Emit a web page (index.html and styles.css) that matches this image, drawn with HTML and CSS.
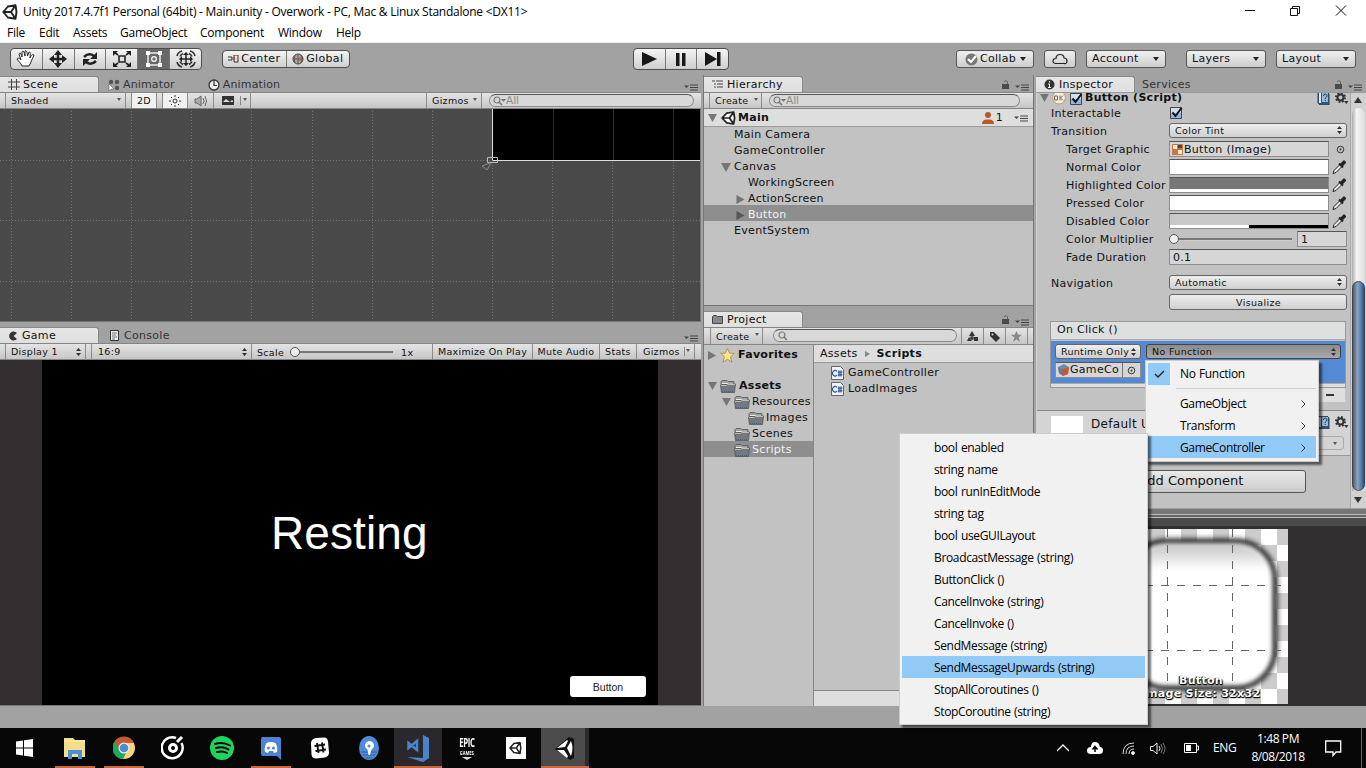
FILE: index.html
```html
<!DOCTYPE html>
<html lang="en">
<head>
<meta charset="utf-8">
<title>Unity Editor</title>
<link rel="stylesheet" href="styles.css">
</head>
<body>
<svg class="defs" width="0" height="0">
  <symbol id="unity" viewBox="0 0 16 16"><path fill="none" stroke="#222" stroke-width="1.900" stroke-linejoin="round" d="M1.200 8L6 2.500 13.500 1.200 14.500 8l-1 6.800L6 13.500zM2 8h7l4-6M9 8l4 6"/></symbol>
  <symbol id="menu" viewBox="0 0 14 7"><path d="M0 1.500h5L2.500 4z" fill="#444"/><path d="M6 1h8M6 3.500h8M6 6h8" stroke="#444" stroke-width="1"/></symbol>
  <symbol id="lock" viewBox="0 0 9 9"><path d="M1 4h7v5H1z" fill="#4a4a4a"/><path d="M3 2q1.500-2.500 3.500-.5V4" fill="none" stroke="#666"/></symbol>
  <symbol id="down" viewBox="0 0 10 9"><path d="M0 0h10L5 9z" fill="#757575"/></symbol>
  <symbol id="right" viewBox="0 0 9 10"><path d="M0 0v10l9-5z" fill="#757575"/></symbol>
  <symbol id="glass" viewBox="0 0 12 10"><circle cx="4" cy="4" r="3" fill="none" stroke="#777" stroke-width="1.200"/><path d="M6 6l3 3" stroke="#777" stroke-width="1.500"/></symbol>
  <symbol id="updown" viewBox="0 0 5 8"><path d="M0 3h5L2.500 0zM0 5h5L2.500 8z" fill="#333"/></symbol>
  <symbol id="folder" viewBox="0 0 16 13"><path d="M1 1.500L2 .5h5l1 1h6v3H1z" fill="#9b9fa2" stroke="#555" stroke-width=".8"/><path d="M2 3.500h11" stroke="#eee"/><path d="M.5 5h6l1-1h8l-1 8.500h-13z" fill="#75797d" stroke="#53575b" stroke-width=".8"/><path d="M1 5.500h5.500l1-1H15" stroke="#bbb" fill="none"/><path d="M2 11.500h12" stroke="#415e91" stroke-dasharray="1 1"/></symbol>
  <symbol id="cs" viewBox="0 0 13 14"><path d="M.5.500h9l3 3v10H.5z" fill="#f1f2f3" stroke="#656565"/><path d="M6 5.200A2.700 2.700 0 1 0 6 9.300M8 4.500v6M10 4.500v6M6.800 6.200h4.500M6.800 8.800h4.500" fill="none" stroke="#285aa8" stroke-width="1.200"/></symbol>
  <symbol id="dropper" viewBox="0 0 14 14"><path d="M1 13l1-3 6-6 2 2-6 6z" fill="#e8e8e8" stroke="#222"/><path d="M7 3l4 4M9 4l3-3 1 1-3 3z" stroke="#222" stroke-width="2"/></symbol>
  <symbol id="target" viewBox="0 0 9 9"><circle cx="4.500" cy="4.500" r="3.300" fill="none" stroke="#333"/><circle cx="4.500" cy="4.500" r="1" fill="#333"/></symbol>
  <symbol id="check" viewBox="0 0 13 13"><path d="M.5 1.500h11v11H.5z" fill="#8fb6e3" stroke="#444"/><path d="M1 2h10v5H1z" fill="#d2dfed"/><path d="M2.500 6.500l3 3.500 6-8" fill="none" stroke="#111" stroke-width="2"/></symbol>
  <symbol id="book" viewBox="0 0 13 13"><path d="M1 0h9l2 2v11H3l-2-2z" fill="#2f557f" stroke="#345"/><path d="M2 1h2v10H2z" fill="#d7e8f8"/><path d="M5 1h6v9H5z" fill="#9ab9d9"/><path d="M6.500 4q0-2 1.800-2T10 4q0 1-1.700 2v1m0 1v1" fill="none" stroke="#244" /></symbol>
  <symbol id="gear" viewBox="0 0 14 13"><circle cx="5.500" cy="5.500" r="3" fill="none" stroke="#333" stroke-width="2"/><circle cx="5.500" cy="5.500" r="4.500" fill="none" stroke="#333" stroke-width="2" stroke-dasharray="1.800 1.730"/><path d="M9 9h4.500l-2.200 3z" fill="#333"/></symbol>
  <symbol id="lens" viewBox="0 0 14 10"><use href="#glass" width="12" height="10"/><path d="M8 3h5l-2.500 3z" fill="#777"/></symbol>
</svg>

<header class="titlebar">
  <svg class="logo" width="16" height="16"><use href="#unity"/></svg>
  <span class="title">Unity 2017.4.7f1 Personal (64bit) - Main.unity - Overwork - PC, Mac &amp; Linux Standalone &lt;DX11&gt;</span>
  <svg class="winbtns" width="110" height="14" viewBox="0 0 110 14" fill="none" stroke="#111"><path d="M1 6.500h10M46.500 4.500h7v7h-7zM48.500 4.500v-2h7v7h-2M92 1.500l10 10M102 1.500l-10 10"/></svg>
</header>
<nav class="menubar"><span style="width:32px">File</span><span style="width:34px">Edit</span><span style="width:47px">Assets</span><span style="width:80px">GameObject</span><span style="width:78px">Component</span><span style="width:58px">Window</span><span>Help</span></nav>

<div class="toolbar">
  <div class="group tools">
    <div class="cell"><svg width="20" height="18" viewBox="0 0 20 18"><path d="M6 16c-1-3-4-5-5-7 1-2 3 0 4 1L3 4c1-2 2-1 3 3L6 2c1-2 2-1 3 4l0-5c1-1 2 0 2.500 5L13 2c2 0 1 3 1 6 1-3 3-4 4-3-1 3-2 4-3 7l-2 4z" fill="#fff" stroke="#222"/></svg></div>
    <div class="cell"><svg width="18" height="18" viewBox="0 0 18 18"><path d="M9 2v14M2 9h14" stroke="#222" stroke-width="2.500"/><path d="M9 0l4 5H5zM9 18l4-5H5zM0 9l5-4v8zM18 9l-5-4v8z" fill="#222"/></svg></div>
    <div class="cell"><svg width="18" height="16" viewBox="0 0 18 16"><path d="M3 6q5-5 10-1M15 10q-5 5-10 1" fill="none" stroke="#222" stroke-width="2.500"/><path d="M16 1v7H9zM2 15V8h7z" fill="#222"/></svg></div>
    <div class="cell"><svg width="18" height="16" viewBox="0 0 18 16"><path d="M6 5h6v6H6zM1 1l4 3M17 1l-4 3M1 15l4-3M17 15l-4-3" fill="none" stroke="#222" stroke-width="1.600"/><path d="M0 0h5L0 5zM18 0h-5l5 5zM0 16h5l-5-5zM18 16h-5l5-5z" fill="#222"/></svg></div>
    <div class="cell on"><svg width="18" height="18" viewBox="0 0 18 18"><path d="M3 3h12v12H3z" fill="none" stroke="#eee" stroke-width="1.500"/><path d="M1 1h4v4H1zM13 1h4v4h-4zM1 13h4v4H1zM13 13h4v4h-4z" fill="#fff"/><circle cx="9" cy="9" r="2.300" fill="none" stroke="#fff" stroke-width="1.300"/></svg></div>
    <div class="cell"><svg width="20" height="18" viewBox="0 0 20 18"><path d="M10 4v10M5 9h10" stroke="#222" stroke-width="1.500"/><path d="M10 2l3 3H7zM10 16l3-3H7zM3 9l3-3v6zM17 9l-3-3v6z" fill="#222"/><path d="M1 6q1-4 5-5M14 1q4 1 5 5M1 12q1 4 5 5M14 17q4-1 5-5M4 6.500q1-2 3-3M13 3.500q2 1 3 3M4 11.500q1 2 3 3M13 14.500q2-1 3-3" fill="none" stroke="#333" stroke-width="1.600"/></svg></div>
  </div>
  <div class="group pivot">
    <div class="cell"><svg width="11" height="8" viewBox="0 0 11 8"><path d="M0 2h4v3H0M6 0h4v7H6z" fill="none" stroke="#333"/><path d="M5 2h2v3H5z" fill="#d14b22"/></svg>Center</div>
    <div class="cell"><svg width="12" height="12" viewBox="0 0 12 12"><circle cx="6" cy="6" r="5" fill="#aaa" stroke="#444"/><path d="M6 1v10M1 6h10M3 2q-2 4 0 8M9 2q2 4 0 8" fill="none" stroke="#555"/><path d="M5 5h5M5 7h5" stroke="#bd6039"/></svg>Global</div>
  </div>
  <div class="group play">
    <div class="cell"><svg width="15" height="14"><path d="M0 0v14l15-7z" fill="#181818"/></svg></div>
    <div class="cell"><svg width="10" height="13"><path d="M0 0h3.500v13H0zM6 0h3.500v13H6z" fill="#181818"/></svg></div>
    <div class="cell"><svg width="16" height="14"><path d="M0 0v14l12-7zM12 0h3.500v14H12z" fill="#181818"/></svg></div>
  </div>
  <div class="btn collab"><svg width="13" height="13" viewBox="0 0 13 13"><circle cx="6.500" cy="6.500" r="6" fill="#777"/><path d="M3 6l3 3 5-6" fill="none" stroke="#fff" stroke-width="2"/></svg><span>Collab</span><i class="arr"></i></div>
  <div class="btn cloud"><svg width="16" height="12" viewBox="0 0 16 12"><path d="M4 10.500q-3 0-3-2.500t3-2.500q0-4 4-4t4 3.500q3 0 3 3t-3 2.500z" fill="none" stroke="#222" stroke-width="1.200"/></svg></div>
  <div class="btn sel">Account<i class="arr"></i></div>
  <div class="btn sel layers">Layers<i class="arr"></i></div>
  <div class="btn sel">Layout<i class="arr"></i></div>
</div>

<main class="dock">
  <section class="col left">
    <div class="tabs">
      <div class="tab active"><svg width="12" height="11" viewBox="0 0 12 11"><path d="M3.500 0v11M8.500 0v11M0 3h12M0 8h12" stroke="#444"/></svg>Scene</div>
      <div class="tab animator"><svg width="12" height="12" viewBox="0 0 12 12"><g fill="#555"><circle cx="3" cy="3" r="2.200"/><circle cx="9" cy="3" r="2.200"/><circle cx="9" cy="9" r="2.200"/></g><path d="M1 5v7l2-2h3z" fill="#fff" stroke="#555" stroke-width=".5"/></svg>Animator</div>
      <div class="tab animation"><svg width="12" height="12" viewBox="0 0 12 12"><circle cx="6" cy="6" r="5" fill="#eee" stroke="#333" stroke-width="1.300"/><path d="M6 2v4.500h3" fill="none" stroke="#333" stroke-width="1.200"/></svg>Animation</div>
      <svg class="tabmenu" width="14" height="7"><use href="#menu"/></svg>
    </div>
    <div class="bar scenebar">
      <div class="seg shaded">Shaded<i class="arr s"></i></div>
      <div class="seg lit twod">2D</div>
      <div class="seg lit sun"><svg width="12" height="12" viewBox="0 0 12 12" fill="none" stroke="#333"><circle cx="6" cy="6" r="2"/><path d="M6 0v2M6 10v2M0 6h2M10 6h2M2 2l1 1M10 2L9 3M2 10l1-1M10 10L9 9"/></svg></div>
      <div class="seg snd"><svg width="14" height="12" viewBox="0 0 14 12"><path d="M1 4h2l4-3v10L3 8H1z" fill="#aaa" stroke="#666"/><path d="M9 3q2 3 0 6M11 1q3 5 0 10" fill="none" stroke="#666"/></svg></div>
      <div class="seg pic"><svg width="12" height="9"><path d="M0 0h12v9H0z" fill="#333"/><path d="M1 6l3-3 4 3 2-2 1 1v1z" fill="#ddd"/></svg><b></b><i class="arr s"></i></div>
      <div class="seg giz">Gizmos<i class="arr s"></i></div>
      <div class="search scenesearch"><svg width="14" height="10"><use href="#lens"/></svg>All</div>
    </div>
    <div class="scene">
      <svg width="700" height="212" viewBox="0 1 700 212">
        <path fill="none" stroke="#747474" stroke-dasharray="1 2" d="M11.500 0v214M71.500 0v214M131.500 0v214M191.500 0v214M251.500 0v214M312.500 0v214M372.500 0v214M432.500 0v214M492.500 0v214M552.500 0v214M612.500 0v214M673.500 0v214M0 52.500h700M0 112.500h700M0 173.500h700"/>
        <path fill="#000" d="M492 0h208v53H492z"/>
        <path stroke="#302b2c" d="M553.500 0v52M613.500 0v52M673.500 0v52"/>
        <path stroke="#ddd" fill="none" d="M492.500 0v52.500H700"/>
        <path stroke="#bbb" fill="none" d="M487.500 49.500h10v5h-10z"/><path stroke="#888" fill="none" d="M490 55l-8 3 5 4 4-7"/>
      </svg>
    </div>
    <div class="tabs second">
      <div class="tab active"><svg width="11" height="10" viewBox="0 0 11 10"><path d="M9 2A4.500 4.500 0 1 0 9 8L5.500 5z" fill="#333"/></svg>Game</div>
      <div class="tab console"><svg width="9" height="11"><path d="M.5.500h8v10h-8z" fill="#eee" stroke="#333"/><path d="M2 3h5M2 5h4M2 7h5M2 9h3" stroke="#555" stroke-width=".8"/></svg>Console</div>
      <svg class="tabmenu" width="14" height="7"><use href="#menu"/></svg>
    </div>
    <div class="bar gamebar">
      <div class="seg disp">Display 1<svg width="5" height="8"><use href="#updown"/></svg></div>
      <div class="seg ratio">16:9<svg width="5" height="8"><use href="#updown"/></svg></div>
      <div class="seg scale">Scale<div class="slider"><i></i></div>1x</div>
      <div class="seg max">Maximize On Play</div>
      <div class="seg mute">Mute Audio</div>
      <div class="seg stats">Stats</div>
      <div class="seg giz2">Gizmos<b></b><i class="arr s"></i></div>
    </div>
    <div class="game"><div class="screen"><div class="resting">Resting</div><div class="uibutton">Button</div></div></div>
  </section>

  <section class="col mid">
    <div class="tabs">
      <div class="tab active"><svg width="12" height="9" viewBox="0 0 12 9"><path d="M0 1h3M4 1h7M2 4h2M5 4h6M2 7h2M5 7h6" stroke="#444"/></svg>Hierarchy</div>
      <svg class="tablock" width="9" height="9"><use href="#lock"/></svg><svg class="tabmenu" width="14" height="7"><use href="#menu"/></svg>
    </div>
    <div class="bar"><div class="seg create">Create<i class="arr s"></i></div><div class="search hsearch"><svg width="14" height="10"><use href="#lens"/></svg>All</div></div>
    <div class="hier">
      <div class="root"><svg class="dn" width="9" height="8"><use href="#down"/></svg><svg width="15" height="14" viewBox="0 0 16 16" preserveAspectRatio="none"><path d="M1 8l5-5.500L14 1l1 7-1 7-8-1.500z" fill="#fff"/><use href="#unity" width="16" height="16"/></svg><strong>Main</strong><svg class="person" width="12" height="12"><circle cx="6" cy="3" r="3" fill="#b9592b"/><path d="M0 12q0-4 4-4.500h4q4 .5 4 4.500z" fill="#b9592b"/></svg>1<svg class="rmenu" width="14" height="7"><use href="#menu"/></svg></div>
      <div class="row l1">Main Camera</div>
      <div class="row l1">GameController</div>
      <div class="row l1"><svg width="10" height="9"><use href="#down"/></svg>Canvas</div>
      <div class="row l2">WorkingScreen</div>
      <div class="row l2"><svg width="9" height="9"><use href="#right"/></svg>ActionScreen</div>
      <div class="row l2 picked"><svg width="9" height="9" viewBox="0 0 9 10"><path d="M0 0v10l9-5z" fill="#555"/></svg>Button</div>
      <div class="row l1">EventSystem</div>
    </div>
    <div class="tabs third">
      <div class="tab active"><svg width="12" height="9"><path d="M.5 8.500v-7l1-1h3l1 1h5v7z" fill="#888" stroke="#444"/></svg>Project</div>
      <svg class="tablock" width="9" height="9"><use href="#lock"/></svg><svg class="tabmenu" width="14" height="7"><use href="#menu"/></svg>
    </div>
    <div class="bar pbar"><div class="seg create">Create<i class="arr s"></i></div><div class="search psearch"><svg width="14" height="10"><use href="#glass"/></svg></div>
      <div class="seg ib"><svg width="12" height="11"><path d="M5 0l3 5H2zM0 10l2-4 3 4zM7 6h4v4H7z" fill="#333"/><circle cx="5" cy="7" r="2" fill="#444"/></svg></div><div class="seg ib"><svg width="12" height="11"><path d="M1 1h4l6 6-4 4-6-6z" fill="#333"/><circle cx="3.500" cy="3.500" r="1" fill="#ddd"/></svg></div><div class="seg ib"><svg width="11" height="11" viewBox="0 0 20 20"><path d="M10 0l3 7h7l-6 5 2 8-6-5-6 5 2-8-6-5h7z" fill="#888"/></svg></div><div class="seg ib end"></div>
    </div>
    <div class="project">
      <div class="tree">
        <div class="row fav"><svg width="8" height="9"><use href="#right"/></svg><svg width="15" height="15" viewBox="0 0 20 20"><path d="M10 1l3 6h6l-5 5 2 7-6-4-6 4 2-7-5-5h6z" fill="#ffe48b" stroke="#a37c48"/></svg><strong>Favorites</strong></div>
        <div class="row t0"><svg width="9" height="8"><use href="#down"/></svg><svg class="fo" width="16" height="13"><use href="#folder"/></svg><strong>Assets</strong></div>
        <div class="row t1"><svg width="9" height="8"><use href="#down"/></svg><svg class="fo" width="16" height="13"><use href="#folder"/></svg>Resources</div>
        <div class="row t2"><svg class="fo" width="16" height="13"><use href="#folder"/></svg>Images</div>
        <div class="row t3"><svg class="fo" width="16" height="13"><use href="#folder"/></svg>Scenes</div>
        <div class="row t3 picked"><svg class="fo" width="16" height="13"><use href="#folder"/></svg>Scripts</div>
      </div>
      <div class="files">
        <div class="crumb">Assets<svg width="5" height="6"><path d="M0 0v6l5-3z" fill="#888"/></svg><strong>Scripts</strong></div>
        <div class="row file"><svg width="13" height="14"><use href="#cs"/></svg>GameController</div>
        <div class="row file"><svg width="13" height="14"><use href="#cs"/></svg>LoadImages</div>
        <div class="foot"></div>
      </div>
    </div>
  </section>

  <section class="col right">
    <div class="tabs">
      <div class="tab active insp"><svg width="11" height="11"><circle cx="5.500" cy="5.500" r="5" fill="#333"/><path d="M5.500 2v1.500M4 5h1.500v3.500M4 8.500h3" stroke="#fff" fill="none"/></svg>Inspector</div>
      <div class="tab services">Services</div>
      <svg class="tablock" width="9" height="9"><use href="#lock"/></svg><svg class="tabmenu" width="14" height="7"><use href="#menu"/></svg>
    </div>
    <div class="inspector">
      <div class="props">
        <div class="head"><svg width="9" height="8"><use href="#down"/></svg><svg class="okic" width="14" height="13" viewBox="0 0 14 13"><circle cx="7" cy="5.500" r="6.500" fill="#f4eee2" stroke="#c99553"/><path d="M2.500 4h3v4h-3zM8 3.500v5M11 3.500L8.500 6 11 8.500" fill="none" stroke="#666"/></svg><svg class="ck" width="13" height="13"><use href="#check"/></svg><strong>Button (Script)</strong><svg class="bk" width="13" height="13"><use href="#book"/></svg><svg width="14" height="13"><use href="#gear"/></svg></div>
        <div class="prop p0"><label>Interactable</label><svg width="13" height="13"><use href="#check"/></svg></div>
        <div class="prop p1"><label>Transition</label><div class="drop">Color Tint<svg width="5" height="8"><use href="#updown"/></svg></div></div>
        <div class="prop in"><label>Target Graphic</label><div class="field obj"><svg width="11" height="11"><path d="M0 0h11v11H0z" fill="#c7774a"/><path d="M1 1h4v4H1zM6 6h4v4H6z" fill="#fff0c4"/><path d="M6 1h4v3H6z" fill="#444"/></svg>Button (Image)</div><svg class="tg" width="9" height="9"><use href="#target"/></svg></div>
        <div class="prop in"><label>Normal Color</label><div class="field white"></div><svg class="dp" width="14" height="15"><use href="#dropper"/></svg></div>
        <div class="prop in"><label>Highlighted Color</label><div class="field hl"></div><svg class="dp" width="14" height="15"><use href="#dropper"/></svg></div>
        <div class="prop in"><label>Pressed Color</label><div class="field white"></div><svg class="dp" width="14" height="15"><use href="#dropper"/></svg></div>
        <div class="prop in"><label>Disabled Color</label><div class="field dis"></div><svg class="dp" width="14" height="15"><use href="#dropper"/></svg></div>
        <div class="prop in"><label>Color Multiplier</label><div class="slider wide"><i></i></div><div class="field num">1</div></div>
        <div class="prop in"><label>Fade Duration</label><div class="field full-w">0.1</div></div>
        <div class="prop nav"><label>Navigation</label><div class="drop">Automatic<svg width="5" height="8"><use href="#updown"/></svg></div></div>
        <div class="prop vis"><div class="drop center">Visualize</div></div>
        <div class="event">
          <div class="evhead">On Click ()</div>
          <div class="evbody">
            <div class="evl"><div class="drop">Runtime Only<svg width="5" height="8"><use href="#updown"/></svg></div><div class="field go"><svg width="11" height="12"><path d="M0 3l6-3 5 3-1 7-5 2-4-3z" fill="#6790b5"/><path d="M5 5l6-2-1 7-5 2z" fill="#cf5431"/><path d="M0 3l5 2v7L1 9z" fill="#777"/></svg>GameCo<span><svg width="9" height="9"><use href="#target"/></svg></span></div></div>
            <div class="drop dark">No Function<svg width="5" height="8"><use href="#updown"/></svg></div>
          </div>
          <div class="evfoot"></div>
        </div>
        <div class="minus"><i></i></div>
        <div class="material"><div class="swatch"></div><span>Default UI Material</span><svg class="bk" width="13" height="13"><use href="#book"/></svg><svg width="14" height="13"><use href="#gear"/></svg><div class="shader"><i class="arr s"></i></div></div>
        <div class="addrow"><div class="add">Add Component</div></div>
      </div>
      <div class="scroll"><svg width="10" height="7"><path d="M5 0l4 6H1z" fill="#333"/></svg><div class="track"><div class="thumb"></div></div><svg width="10" height="7"><path d="M1 0h8L5 6z" fill="#333"/></svg></div>
    </div>
    <div class="prevhead"></div>
    <div class="preview">
      <div class="checker"><svg width="175" height="175" viewBox="0 0 175 175">
        <defs><linearGradient id="sheen" x2="0" y2="1"><stop stop-color="#c5c5c5"/><stop offset=".18" stop-color="#fff"/></linearGradient><filter id="soft" x="-.1" y="-.1" width="1.200" height="1.200"><feGaussianBlur stdDeviation="2.500"/></filter></defs>
        <rect x="15" y="13" width="146" height="145" rx="38" fill="#fff" stroke="#222" stroke-width="7" filter="url(#soft)"/>
        <rect x="19" y="16" width="138" height="138" rx="34" fill="url(#sheen)" filter="url(#soft)"/>
        <path d="M54.500 0v175M119.500 0v175M0 56.500h175M0 121.500h175" stroke="#666" stroke-dasharray="8 8"/>
      </svg></div>
      <div class="caption">Button<br>Image Size: 32x32</div>
    </div>
  </section>
</main>
<div class="status"></div>

<footer class="taskbar">
  <div class="tb start"><svg width="17" height="18" viewBox="0 0 17 18"><path d="M0 2.500L7 1.500V8.500H0zM8 1.300L17 0v8.500H8zM0 9.500h7v7L0 15.500zM8 9.500h9V18l-9-1.300z" fill="#fff"/></svg></div>
  <div class="tb run"><svg width="22" height="21" viewBox="0 0 22 21"><path d="M0 0h9l2 2h10v17H0z" fill="#f5dc86"/><path d="M0 3h21" stroke="#fff2b8"/><path d="M4 21v-9h14v9h-4v-5H8v5z" fill="#4a8ddb"/></svg></div>
  <div class="tb run"><svg width="22" height="24" viewBox="0 0 22 24" preserveAspectRatio="none"><circle cx="11" cy="12" r="11" fill="#f6d674"/><path d="M11 12L2 5a11 11 0 0 1 19 2H11z" fill="#c15b35"/><path d="M2 5a11 11 0 0 0 8 18l4-8-3-3z" fill="#22a85a"/><path d="M1.500 6Q9-4 20.500 7H11l-5 5z" fill="#c15b35"/><circle cx="11" cy="12" r="5.500" fill="#eee"/><circle cx="11" cy="12" r="4.300" fill="#4b8bd3"/></svg></div>
  <div class="tb"><svg width="24" height="26" viewBox="0 0 24 26"><path d="M15 3A10.500 10.500 0 1 0 20.500 8" fill="none" stroke="#fff" stroke-width="2.500"/><circle cx="12" cy="13" r="3.500" fill="none" stroke="#fff" stroke-width="3"/><path d="M16 7l5-5" stroke="#fff" stroke-width="3"/></svg></div>
  <div class="tb"><svg width="24" height="26" viewBox="0 0 24 26"><circle cx="12" cy="13" r="12" fill="#1ed45e"/><path d="M5 9q8-2.500 15 1.500M6 13q7-2 12.500 1.500M7 17q6-1.500 10 1" fill="none" stroke="#000" stroke-width="2" stroke-linecap="round"/></svg></div>
  <div class="tb run"><svg width="20" height="23" viewBox="0 0 20 23"><path d="M2 0h16q2 0 2 2v21l-4-4H2q-2 0-2-2V2q0-2 2-2z" fill="#4f83d1"/><path d="M4 15Q3 10 5.500 6q4-2 9 0 2.500 4 1.500 9l-3 1-1-2H8l-1 2z" fill="#fff"/><circle cx="7.500" cy="11" r="1.500" fill="#4f83d1"/><circle cx="12.500" cy="11" r="1.500" fill="#4f83d1"/></svg></div>
  <div class="tb"><svg width="20" height="22" viewBox="0 0 20 22"><path d="M6 1l8-.5q3.500 0 4 4l1 11q0 4-4 5l-9 1q-4 0-4.500-4L1 6q0-4 5-5z" fill="#fff"/><path d="M7 6l1.500 10M12 5.500l1.500 10M4.500 9l10.500-1.500M5.500 14l10.500-1.500" stroke="#111" stroke-width="1.900"/></svg></div>
  <div class="tb"><svg width="20" height="24" viewBox="0 0 20 24"><ellipse cx="10" cy="12" rx="10" ry="12" fill="#4e8bd8"/><path d="M2 16h16M4 19h12M7 22h6" stroke="#315f99"/><path d="M8.500 13.500a4.500 4.500 0 1 1 4 0L11 19H9.500z" fill="#fff"/><circle cx="10" cy="10" r="1.500" fill="#4e8bd8"/></svg></div>
  <div class="tb run full vs"><svg width="24" height="27" viewBox="0 0 24 27"><path d="M17 0l6 3v20l-6 4L1 22l16 1z" fill="#4a83ca"/><path d="M2.500 8l8.500 7V6l-8.500 7z" fill="none" stroke="#4a83ca" stroke-width="2.500"/></svg></div>
  <div class="tb epic"><div>EPIC</div><small>GAMES</small><svg width="10" height="3"><path d="M0 0h10L5 3z" fill="#ddd"/></svg></div>
  <div class="tb"><svg width="20" height="22"><path d="M0 0h20v22H0z" fill="#fff"/><use href="#unity" x="3" y="4" width="13" height="14"/></svg></div>
  <div class="tb run full unity"><svg width="21" height="23" viewBox="0 0 21 23"><path d="M0 12L14 0l5 2v19l-4 2z" fill="#111"/><path d="M2 11l10-8 1 1-3 6zM2 13h7l4 6-1 2zM12 11l4-7q3 7 0 15z" fill="#fff"/></svg></div>
  <div class="tray">
    <svg class="up" width="12" height="8"><path d="M0 7l6-6 6 6" fill="none" stroke="#fff" stroke-width="1.300"/></svg>
    <svg class="cl" width="16" height="12"><path d="M4 12Q0 12 0 8.500T4 5q0-5 4-5t5 5q3 0 3 3.500T12 12z" fill="#fff"/><path d="M8 10V6M5.500 7.500L8 4.500l2.500 3" stroke="#000" fill="none" stroke-width="1.500"/></svg>
    <svg class="wf" width="13" height="13" fill="none" stroke="#ddd"><path d="M1 12Q1 1 12 1M4 12Q4 4 12 4M7 12Q7 7 12 7"/><circle cx="11" cy="11" r="1.500" fill="#fff"/></svg>
    <svg class="sp" width="17" height="13" fill="none" stroke="#eee"><path d="M.5 4.500H3l4-3.500v11L3 8.500H.5zM9 4q2 2.500 0 5"/><path d="M11 2q3 4.500 0 9M13 1q4 5.500 0 11" stroke="#777"/></svg>
    <svg class="ba" width="15" height="10"><path d="M.5.500h12v9H.5zM13 3h1.500v4H13" fill="none" stroke="#fff"/><path d="M2 2h5v6H2z" fill="#fff"/></svg>
    <span class="eng">ENG</span>
    <div class="clock">1:48 PM<br>8/08/2018</div>
    <svg class="no" width="17" height="17"><path d="M.7 1h15v11H11l-3 3.500V12H.7z" fill="none" stroke="#fff" stroke-width="1.300"/></svg>
    <i class="peek"></i>
  </div>
</footer>

<div class="popup functions">
  <div class="item tick"><span class="box"><svg width="11" height="8"><path d="M1 4l3 3 6-6" fill="none" stroke="#222" stroke-width="1.400"/></svg></span>No Function</div>
  <div class="rule"></div>
  <div class="item">GameObject<svg width="5" height="8"><path d="M.5.500L4 4 .5 7.500" fill="none" stroke="#333"/></svg></div>
  <div class="item">Transform<svg width="5" height="8"><path d="M.5.500L4 4 .5 7.500" fill="none" stroke="#333"/></svg></div>
  <div class="item hot">GameController<svg width="5" height="8"><path d="M.5.500L4 4 .5 7.500" fill="none" stroke="#333"/></svg></div>
</div>
<div class="popup members">
  <div class="item">bool enabled</div><div class="item">string name</div><div class="item">bool runInEditMode</div><div class="item">string tag</div><div class="item">bool useGUILayout</div><div class="item">BroadcastMessage (string)</div><div class="item">ButtonClick ()</div><div class="item">CancelInvoke (string)</div><div class="item">CancelInvoke ()</div><div class="item">SendMessage (string)</div><div class="item hot">SendMessageUpwards (string)</div><div class="item">StopAllCoroutines ()</div><div class="item">StopCoroutine (string)</div>
</div>
</body>
</html>
```
FILE: styles.css
```css
* { box-sizing: border-box; }
body { margin: 0; width: 1366px; height: 768px; overflow: hidden; position: relative; background: #a2a2a2; color: #111; font: 11px/16px "DejaVu Sans", sans-serif; letter-spacing: .3px; white-space: nowrap; }
svg { display: block; flex: none; }
.defs { position: absolute; }
strong { letter-spacing: .3px; }

.titlebar, .menubar { background: #fff; font-family: "Open Sans", "Noto Sans", sans-serif; font-size: 12px; letter-spacing: -.25px; color: #000; display: flex; align-items: center; }
.titlebar { height: 24px; padding-left: 2px; }
.title { margin-left: 5px; }
.winbtns { margin-left: auto; margin-right: 12px; margin-top: -3px; }
.menubar { height: 19px; padding: 0 0 0 7px; border-bottom: 1px solid #eee; }

.toolbar { height: 32px; display: flex; align-items: center; padding-left: 10px; }
.group { display: flex; border: 1px solid #4e4e4e; border-radius: 4px; overflow: hidden; background: linear-gradient(#f4f4f4, #cfcfcf); }
.cell { display: flex; align-items: center; justify-content: center; flex: 1; border-left: 1px solid #777; }
.cell:first-child { border-left: 0; }
.cell.on { background: #686868; }
.tools { width: 192px; height: 22px; }
.pivot { width: 128px; height: 18px; margin-left: 20px; letter-spacing: .35px; }
.pivot .cell { gap: 2px; }
.play { width: 96px; height: 22px; margin-left: 283px; }
.btn { height: 18px; border: 1px solid #555; border-radius: 3px; background: linear-gradient(#f0f0f0, #cdcdcd); display: flex; align-items: center; }
.collab { width: 78px; margin-left: 227px; padding: 0 7px 0 8px; }
.collab span { margin: 0 auto 0 2px; }
.cloud { width: 32px; margin-left: 10px; justify-content: center; }
.sel { width: 80px; margin-left: 10px; padding: 0 6px 0 5px; justify-content: space-between; }
.layers { margin-left: 20px; }
.arr { width: 0; height: 0; border: 3px solid transparent; border-top: 4px solid #222; border-bottom: 0; flex: none; }
.arr.s { border-width: 3px 2.500px 0; border-top-color: #555; }

.dock { height: 631px; display: grid; grid-template-columns: 701px 331px 330px; column-gap: 2px; }
.col { display: flex; flex-direction: column; min-height: 0; overflow: hidden; }
.mid { border-left: 1px solid #777; border-right: 1px solid #777; }
.tabs { height: 17px; display: flex; padding-top: 1px; flex: none; }
.tab { display: flex; align-items: center; gap: 3px; color: #333; height: 16px; padding-top: 1px; }
.tab.active { width: 99px; padding-top: 0; padding-left: 8px; background: linear-gradient(#e6e6e6, #dfdfdf); border: solid #888; border-width: 1px 1px 0 0; border-radius: 0 3px 0 0; color: #111; }
.animator { margin-left: 9px; letter-spacing: .15px; }
.animation { margin-left: 33px; letter-spacing: .15px; }
.console { margin-left: 11px; gap: 5px; }
.tabmenu { margin: 8px 4px 0 auto; }
.left .tabmenu { margin-right: 3px; }
.tablock { margin: 4px 0 0 auto; }
.tablock + .tabmenu { margin-left: 5px; }
.services { margin-left: 7px; }
.tab.insp { gap: 4px; }
.second, .third { margin-top: 4px; }
.bar { height: 17px; flex: none; border: solid #858585; border-width: 1px 0; background: linear-gradient(#e4e4e4, #c6c6c6); display: flex; align-items: stretch; font-size: 9.500px; line-height: 15px; letter-spacing: .3px; padding-left: 5px; }
.seg { display: flex; align-items: center; border: solid #8b8b8b; border-width: 0 1px 0 0; }
.seg > .arr:last-child { margin-left: auto; margin-top: -3px; }
.shaded { width: 121px; padding: 0 4px 0 5px; border-left-width: 1px; }
.lit { background: #f1f1f1; justify-content: center; }
.twod { width: 26px; margin-left: 5px; border-left-width: 1px; }
.sun { width: 26px; margin-left: 5px; border-left-width: 1px; }
.snd { width: 26px; justify-content: center; }
.pic { width: 37px; padding: 0 3px 0 8px; }
.pic b, .giz2 b { width: 1px; height: 9px; background: #888; margin-left: 6px; }
.giz { width: 56px; margin-left: 175px; padding: 0 4px 0 5px; border-left-width: 1px; }
.search { height: 13px; margin-top: 1px; border: 1px solid #8a8a8a; border-top-color: #555; border-radius: 8px; background: #d8d8d8; display: flex; align-items: center; color: #888; padding-left: 3px; font-size: 10.500px; letter-spacing: 0; line-height: 11px; }
.search svg { margin-right: -1px; }
.scenesearch { width: 205px; margin-left: 7px; }
.hsearch { width: 251px; margin-left: 7px; }
.psearch { width: 184px; margin: 1px 4px 0 10px; }
.create { width: 53px; padding: 0 3px 0 5px; border-left-width: 1px; }
.scene { height: 213px; background: #494949; width: 701px; border-right: 1px solid #777; border-bottom: 1px solid #777; flex: none; }
.disp { width: 81px; padding: 0 4px 0 5px; justify-content: space-between; border-left-width: 1px; }
.ratio { width: 161px; margin-left: 5px; padding: 0 4px 0 6px; justify-content: space-between; border-left-width: 1px; }
.scale { width: 181px; padding-left: 5px; padding-top: 2px; }
.slider { width: 103px; height: 3px; margin: 0 8px 0 6px; background: #777; border-bottom: 1px solid #ccc; display: flex; align-items: center; }
.slider i { width: 10px; height: 10px; border: 1px solid #555; border-radius: 50%; background: #eee; flex: none; }
.max, .mute, .stats { justify-content: center; }
.max { width: 100px; }
.mute { width: 67px; }
.stats { width: 37px; }
.giz2 { width: 58px; padding: 0 4px 0 6px; }
.giz2 b { margin-left: 4px; }
.game { flex: 1; background: #332f30; padding: 0 43px 0 42px; border-bottom: 1px solid #777; }
.screen { height: 100%; background: #000; display: flex; flex-direction: column; color: #fff; font-family: "Liberation Sans", sans-serif; letter-spacing: 0; padding: 145px 12px 0 0; }
.resting { font-size: 46px; line-height: 56px; padding-left: 229px; letter-spacing: .1px; }
.uibutton { margin: 115px 0 0 auto; width: 76px; height: 21px; border-radius: 3px; background: #fff; color: #222; text-align: center; font-size: 10.500px; line-height: 22px; }

.hier { height: 197px; background: #c2c2c2; border-bottom: 1px solid #777; }
.row { height: 16px; display: flex; align-items: center; padding-top: 2px; }
.hier .row { padding-top: 4px; }
.root { height: 18px; padding-top: 1px; background: #dedede; border-bottom: 1px solid #999; display: flex; align-items: center; margin-bottom: -2px; }
.root .dn { margin: 0 4px 0 4px; }
.root strong { margin-left: 2px; }
.person { margin: 0 2px 0 auto; }
.rmenu { margin: 0 5px 0 11px; }
.l1 { padding-left: 30px; }
.l2 { padding-left: 44px; }
.l1 svg { margin: 0 3px 0 -13px; }
.l2 svg { margin: 0 3px 0 -12px; }
.picked { background: #8e8e8f; color: #f3f3f3; }
.ib { width: 22px; justify-content: center; border-width: 0 0 0 1px; }
.ib.end { width: 6px; }
.pbar { height: 18px; padding-left: 6px; }
.project { flex: 1; display: flex; background: #c2c2c2; }
.tree { width: 110px; border-right: 1px solid #888; padding-top: 1px; overflow: hidden; flex: none; }
.fav, .t0 { padding-left: 4px; }
.fav svg + svg { margin: 0 3px 0 4px; }
.fav { margin-bottom: 15px; }
.fo { margin: 0 2px 0 4px; }
.t0 .fo { margin: 0 3px 0 3px; }
.t1 { padding-left: 18px; }
.t1 .fo { margin-left: 3px; }
.t2 { padding-left: 40px; }
.t3 { padding-left: 26px; }
.files { flex: 1; display: flex; flex-direction: column; }
.crumb { height: 18px; padding-top: 1px; background: #dedede; border-bottom: 1px solid #999; padding-left: 6px; display: flex; align-items: center; }
.crumb svg { margin: 0 7px; }
.file { padding-left: 17px; gap: 4px; }
.crumb + .file { margin-top: 1px; }
.foot { margin-top: auto; height: 16px; background: #dedede; border-top: 1px solid #888; }

.inspector { height: 416px; display: flex; background: #c2c2c2; border-top: 1px solid #999; border-left: 1px solid #d4d4d4; overflow: hidden; flex: none; }
.props { flex: 1; min-width: 0; }
.head { height: 12px; margin-top: -2px; display: flex; align-items: center; padding: 2px 1px 0 3px; }
.head .okic { margin: 0 4px 0 3px; }
.head strong { margin-left: 2px; margin-right: auto; }
.bk { margin-right: 5px; }
.prop { height: 18px; display: flex; align-items: center; padding-left: 14px; }
.prop label { width: 118px; flex: none; margin-top: 4px; }
.prop.in { padding-left: 29px; }
.prop.in label { width: 103px; letter-spacing: .25px; }
.prop.p0 label { width: 119px; }
.drop { height: 15px; width: 178px; border: 1px solid #666; border-radius: 3px; background: linear-gradient(#eee, #cfcfcf); font-size: 9.500px; line-height: 13px; display: flex; align-items: center; justify-content: space-between; padding: 0 4px 0 5px; letter-spacing: .35px; }
.drop.center { justify-content: center; height: 16px; }
.field { width: 160px; height: 16px; background: #d6d6d6; border: 1px solid #8e8e8e; border-top-color: #555; display: flex; align-items: center; padding-left: 3px; }
.in .field { margin-top: 2px; padding-top: 1px; }
.in .obj { gap: 1px; padding-left: 2px; }
.tg { margin-left: 7px; margin-top: 2px; }
.dp { margin-left: 3px; margin-top: 2px; }
.white { background: #fff; }
.hl { background: linear-gradient(#777 11px, #fff 11px); }
.dis { background: linear-gradient(90deg, #fff 50%, #000 50%) bottom / 100% 3px no-repeat #c8c8c8; }
.slider.wide { width: 123px; margin: 3px 5px 0 0; }
.num { width: 50px; }
.full-w { width: 178px; }
.nav { margin-top: 8px; }
.vis { margin-top: 2px; padding-left: 132px; }
.event { margin: 10px 0 0 13px; width: 296px; border: 1px solid #999; }
.evhead { height: 18px; background: #dedfdf; padding-left: 6px; border-bottom: 1px solid #aaa; line-height: 16px; }
.evbody { height: 42px; background: #5589d4; display: flex; margin-top: 1px; padding: 3px 4px 0 4px; gap: 5px; }
.evl { display: flex; flex-direction: column; gap: 3px; }
.evl .drop { width: 86px; letter-spacing: .3px; }
.dark { width: 195px; background: linear-gradient(#8c8c8c, #a9a9a9); border-color: #444; }
.go { width: 86px; gap: 1px; padding-left: 2px; }
.go span { margin-left: auto; width: 18px; height: 14px; border-left: 1px solid #777; display: flex; align-items: center; justify-content: center; }
.evfoot { height: 4px; background: #dedede; border-top: 1px solid #aaa; }
.minus { margin: 0 5px 0 auto; width: 30px; height: 14px; background: #dedede; display: flex; align-items: center; justify-content: center; }
.minus i { width: 8px; height: 2px; background: #333; }
.material { margin-top: 8px; height: 46px; border-top: 1px solid #888; border-bottom: 1px solid #999; background: #d4d4d4; display: flex; flex-wrap: wrap; align-content: flex-start; padding: 5px 1px 0 14px; }
.swatch { width: 32px; height: 17px; background: #fff; }
.material span { margin-left: 8px; margin-right: auto; font-size: 12px; width: 56px; overflow: hidden; }
.shader { margin: 3px 0 0 213px; width: 80px; height: 14px; border: 1px solid #aaa; border-radius: 3px; display: flex; align-items: center; justify-content: flex-end; padding-right: 6px; }
.addrow { padding: 14px 0 0 39px; }
.add { width: 230px; height: 23px; border: 1px solid #555; border-radius: 3px; background: linear-gradient(#eaeaea, #cacaca); text-align: center; line-height: 20px; font-size: 13px; letter-spacing: 0; }
.scroll { width: 16px; background: #d0d0d0; border-left: 1px solid #aaa; display: flex; flex-direction: column; align-items: center; padding: 4px 1px 4px 0; }
.track { flex: 1; width: 13px; margin: 4px 0 6px; border-radius: 7px 7px 0 0; background: linear-gradient(90deg, #aaa, #f3f3f3 35%, #ddd); padding-top: 173px; }
.thumb { height: 100%; border: 1px solid #444; border-radius: 7px; background: linear-gradient(90deg, #4b5c73, #91a2ba 40%, #4777ae 80%, #224c85); }
.prevhead { height: 17px; margin-top: 1px; flex: none; background: linear-gradient(#777 0 5px, #bbb 5px 6px, #666 6px 8px, #bbb 8px 9px, #4b494a 9px); }
.preview { flex: 1; background: #322f30; padding: 3px 0 0 77px; position: relative; }
.checker { width: 175px; height: 175px; background: conic-gradient(#fff 25%, #ccc 0 50%, #fff 0 75%, #ccc 0) 4px 0 / 32px 32px; }
.caption { position: absolute; left: 65px; bottom: 6px; width: 200px; text-align: center; font-weight: bold; line-height: 13px; color: #fff; text-shadow: 1px 1px 1px #000, -1px 0 1px #000, 0 1px 1px #000; }
.status { height: 22px; background: #a2a2a2; }

.taskbar { height: 40px; background: #080708; display: flex; color: #fff; font-family: "Open Sans", "Noto Sans", sans-serif; font-size: 12px; letter-spacing: -.3px; }
.tb { width: 48px; margin-right: 1px; display: flex; align-items: center; justify-content: center; position: relative; }
.start { margin-right: 3px; }
.run::after { content: ""; position: absolute; left: 4px; right: 4px; bottom: 0; height: 2px; background: #c8673d; }
.full::after { left: 0; right: 0; }
.vs { background: #2b282d; }
.unity { background: linear-gradient(90deg, #4b4b4b 44px, #2c2a2b 44px); }
.epic { flex-direction: column; text-align: center; font: bold 12px/13px "Open Sans", sans-serif; letter-spacing: -.5px; gap: 1px; padding-top: 0; }
.epic div { transform: scaleX(.65); }
.epic small { font-size: 5px; line-height: 6px; letter-spacing: 0; transform: scaleX(.8); }
.tray { margin-left: auto; width: 309px; display: flex; align-items: center; }
.cl { margin-left: 18px; }
.wf { margin-left: 19px; }
.sp { margin-left: 15px; }
.ba { margin-left: 17px; }
.eng { margin-left: 14px; width: 24px; }
.clock { margin-left: 13px; width: 56px; text-align: center; line-height: 18px; letter-spacing: -.4px; }
.no { margin-left: 19px; }
.peek { margin-left: auto; margin-right: 4px; width: 1px; height: 40px; background: #666; }

.popup { position: absolute; background: #f1f1f1; border: 1px solid #ccc; box-shadow: 3px 3px 2px rgba(0,0,0,.55); font-family: "Open Sans", "Noto Sans", sans-serif; font-size: 12px; letter-spacing: -.35px; word-spacing: .7px; color: #000; }
.item { height: 22px; display: flex; align-items: center; padding: 1px 0 0 32px; }
.item svg { margin-left: auto; margin-right: 10px; }
.hot { background: #91c9f7; }
.functions { left: 1145px; top: 360px; width: 174px; height: 102px; padding: 2px; }
.tick { padding: 0; }
.box { width: 22px; height: 22px; margin-right: 10px; background: #91c9f7; display: flex; align-items: center; }
.box svg { margin: auto; }
.rule { margin: 3px 0 3px 28px; border-top: 1px solid #d0d0d0; }
.members { left: 899px; top: 433px; width: 249px; height: 292px; padding: 2px; }
```
